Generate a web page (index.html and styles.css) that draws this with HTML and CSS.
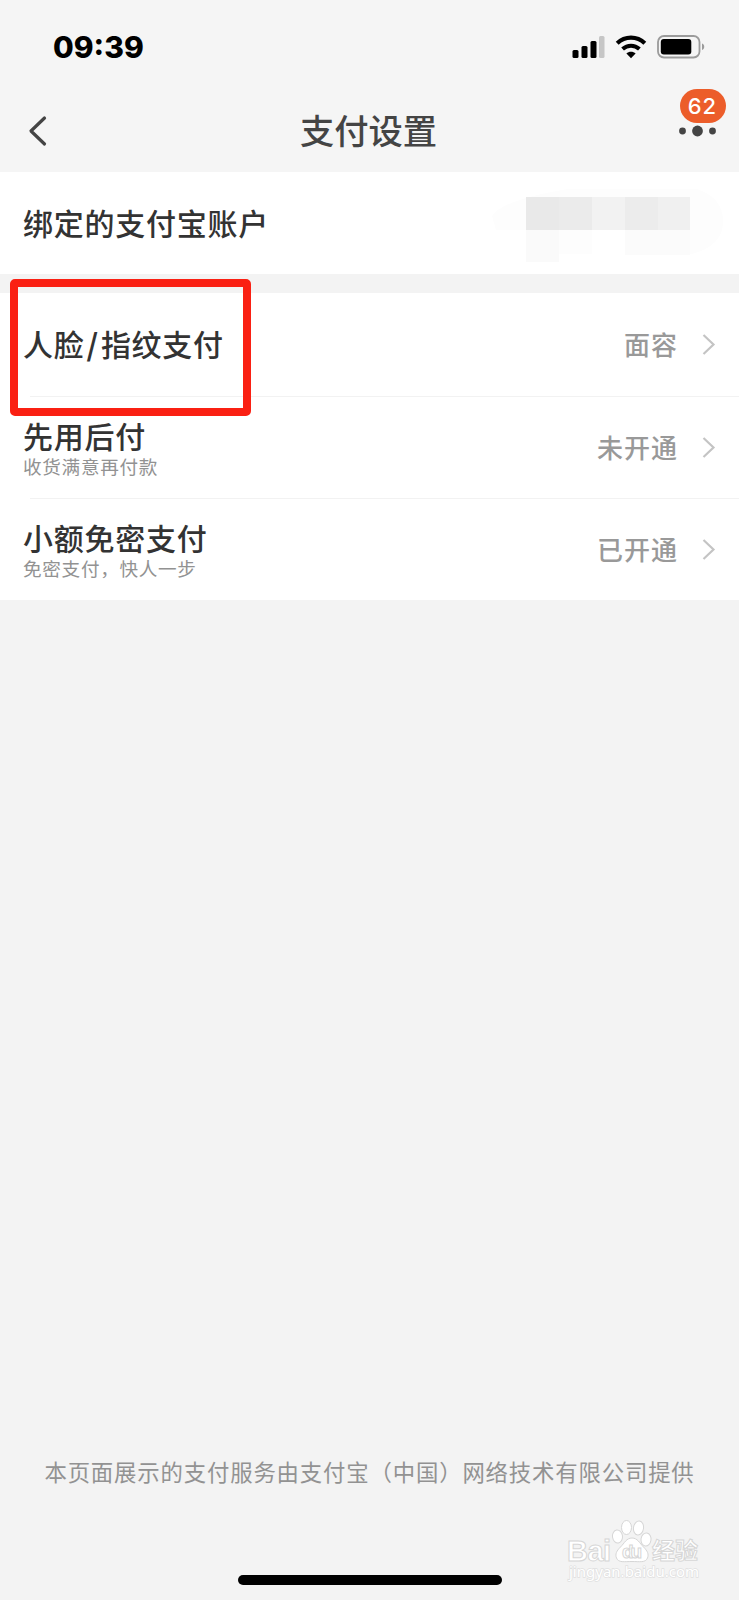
FILE: index.html
```html
<!DOCTYPE html>
<html lang="zh-CN">
<head>
    <meta charset="UTF-8">
    <meta name="viewport" content="width=device-width, initial-scale=1.0">
    <title>支付设置</title>
    <link rel="stylesheet" href="styles.css">
</head>
<body>
    <div class="screen">
        <div class="status-bar">
            <span class="time">09:39</span>
            <div class="status-icons">
                <svg class="signal" width="33" height="24" viewBox="0 0 33 24">
                    <rect x="0.5" y="15" width="6" height="8" rx="1.5"></rect>
                    <rect x="9.5" y="11" width="6" height="12" rx="1.5"></rect>
                    <rect x="18.5" y="6" width="6" height="17" rx="1.5"></rect>
                    <rect x="27" y="1" width="5.5" height="22" rx="1.5" fill="#c6c6c6"></rect>
                </svg>
                <svg class="wifi" width="32" height="24" viewBox="0 0 32 24">
                    <path d="M2.2 8.2C10 0.8 22 0.8 29.8 8.2" fill="none" stroke="#000" stroke-width="4.2"></path>
                    <path d="M7.6 14C12.4 9.6 19.6 9.6 24.4 14" fill="none" stroke="#000" stroke-width="4"></path>
                    <path d="M16 23.2L11.4 18.6C13.8 16.2 18.2 16.2 20.6 18.6Z"></path>
                </svg>
                <svg class="battery" width="48" height="24" viewBox="0 0 48 24">
                    <rect x="1" y="1" width="41.5" height="21.5" rx="6" fill="none" stroke="#9b9b9b" stroke-width="1.8"></rect>
                    <rect x="3.8" y="4" width="30.5" height="15.5" rx="3"></rect>
                    <path d="M45 8.5C48 9.5 48 14 45 15Z" fill="#9b9b9b"></path>
                </svg>
            </div>
        </div>

        <div class="nav-bar">
            <svg class="back" width="20" height="32" viewBox="0 0 20 32">
                <path d="M16.5 3L3 16L16.5 29" fill="none" stroke="#444" stroke-width="3.2" stroke-linecap="round" stroke-linejoin="round"></path>
            </svg>
            <h1 class="title">支付设置</h1>
            <div class="more">
                <svg width="38" height="12" viewBox="0 0 38 12">
                    <circle cx="3.5" cy="6" r="3.4"></circle>
                    <circle cx="18.5" cy="6" r="5.4"></circle>
                    <circle cx="33.5" cy="6" r="3.4"></circle>
                </svg>
                <span class="badge">62</span>
            </div>
        </div>

        <div class="group">
            <div class="row">
                <div class="name">绑定的支付宝账户</div>
                <!-- masked account number -->
                <svg class="mask" width="232" height="76" viewBox="0 0 232 76">
                    <path d="M0 28Q10 12 76 1H205Q232 10 231 35Q230 58 200 66H34V42H4Z" fill="#fdfdfd"></path>
                    <rect x="34" y="42" width="33" height="32" fill="#fafafa"></rect>
                    <rect x="100" y="42" width="33" height="26" fill="#fff"></rect>
                    <rect x="133" y="42" width="65" height="25" fill="#fbfbfb"></rect>
                    <rect x="34" y="9" width="33" height="33" fill="#e9e9e9"></rect>
                    <rect x="67" y="9" width="33" height="33" fill="#ebebeb"></rect>
                    <rect x="100" y="9" width="33" height="33" fill="#f2f2f2"></rect>
                    <rect x="133" y="9" width="33" height="33" fill="#ececec"></rect>
                    <rect x="166" y="9" width="32" height="33" fill="#f0f0f0"></rect>
                </svg>
            </div>
        </div>

        <div class="group">
            <div class="row">
                <div class="name">人脸<span class="slash">/</span>指纹支付</div>
                <span class="value">面容</span>
                <svg class="arrow" width="14" height="22" viewBox="0 0 14 22">
                    <path d="M1.5 2L11.5 11.5L1.5 21" fill="none" stroke="#c4c4c4" stroke-width="2.2"></path>
                </svg>
                <div class="highlight"></div>
            </div>
            <div class="row">
                <div class="name two-line">
                    <p class="label">先用后付</p>
                    <p class="desc">收货满意再付款</p>
                </div>
                <span class="value">未开通</span>
                <svg class="arrow" width="14" height="22" viewBox="0 0 14 22">
                    <path d="M1.5 2L11.5 11.5L1.5 21" fill="none" stroke="#c4c4c4" stroke-width="2.2"></path>
                </svg>
            </div>
            <div class="row">
                <div class="name two-line">
                    <p class="label">小额免密支付</p>
                    <p class="desc">免密支付，快人一步</p>
                </div>
                <span class="value">已开通</span>
                <svg class="arrow" width="14" height="22" viewBox="0 0 14 22">
                    <path d="M1.5 2L11.5 11.5L1.5 21" fill="none" stroke="#c4c4c4" stroke-width="2.2"></path>
                </svg>
            </div>
        </div>

        <div class="footer">
            <p class="notice">本页面展示的支付服务由支付宝（中国）网络技术有限公司提供</p>
            <div class="home-indicator"></div>
        </div>

        <svg class="watermark" width="140" height="72" viewBox="0 0 140 72">
            <g fill="#fff" stroke="#d6d6d6" stroke-width="1">
                <text class="wm-logo" x="5" y="43" textLength="44">Bai</text>
                <ellipse cx="55.5" cy="18.5" rx="5" ry="6.5" transform="rotate(-8 55.5 18.5)"></ellipse>
                <ellipse cx="64.5" cy="9.5" rx="5" ry="7"></ellipse>
                <ellipse cx="76.5" cy="10" rx="5" ry="7" transform="rotate(8 76.5 10)"></ellipse>
                <ellipse cx="84" cy="21.5" rx="5" ry="6.5" transform="rotate(8 84 21.5)"></ellipse>
                <path d="M70 20C75.5 20 77.5 25 81.5 29C85.5 33 87 36 85.5 40C83.5 45 77.5 43.5 70 43.5C62.5 43.5 56.5 45 54.5 40C53 36 54.5 33 58.5 29C62.5 25 64.5 20 70 20Z"></path>
                <text class="wm-du" x="60" y="40" textLength="20">du</text>
                <text class="wm-cn" x="90" y="41">经验</text>
                <text class="wm-url" x="7" y="59" textLength="130">jingyan.baidu.com</text>
            </g>
        </svg>
    </div>
</body>
</html>
```
FILE: styles.css
```css
* {
    box-sizing: border-box;
}

body {
    margin: 0;
    background: #f3f3f3;
    font-family: "Noto Sans CJK SC", "Noto Sans", sans-serif;
}

.screen {
    position: relative;
    display: flex;
    flex-direction: column;
    width: 739px;
    height: 1600px;
    overflow: hidden;
}

.status-bar {
    display: flex;
    justify-content: space-between;
    align-items: center;
    height: 94px;
    padding: 0 34px 0 53px;
    background: #f5f5f5;
}

.time {
    font-family: Inter, sans-serif;
    font-size: 30px;
    font-weight: 800;
    color: #000;
}

.status-icons {
    display: flex;
    align-items: center;
}

.wifi {
    margin: 0 10px 0 10px;
}

.nav-bar {
    display: flex;
    justify-content: space-between;
    align-items: center;
    height: 78px;
    padding: 0 22px 4px 28px;
    background: #f5f5f5;
}

.back {
    margin-right: 10px;
}

.title {
    margin: 0;
    padding-bottom: 4px;
    font-size: 34.3px;
    line-height: 50px;
    font-weight: 500;
    color: #444;
}

.more {
    position: relative;
    display: flex;
    fill: #444;
}

.badge {
    position: absolute;
    left: 1px;
    bottom: 14px;
    width: 46px;
    height: 34px;
    border-radius: 17px;
    background: #ec5d2a;
    color: #fff;
    font-family: Inter, sans-serif;
    font-size: 22px;
    font-weight: 500;
    line-height: 35px;
    letter-spacing: 1px;
    text-indent: -1px;
    text-align: center;
}

.group {
    margin-bottom: 19px;
    background: #fff;
}

.row {
    position: relative;
    display: flex;
    align-items: center;
    height: 102.3px;
    padding: 0 23px;
}

.row + .row::before {
    content: "";
    position: absolute;
    top: 0;
    left: 30px;
    right: 0;
    height: 1px;
    background: #f2f2f2;
}

.name {
    flex: 1;
    padding-bottom: 2px;
    font-size: 30px;
    font-weight: 500;
    line-height: 36px;
    letter-spacing: 0.75px;
    color: #333;
}

.two-line {
    padding: 2px 0 0;
}

.slash {
    margin: 0 2px;
    font-weight: 700;
}

.label {
    margin: 0;
}

.desc {
    margin: 0;
    font-size: 18.6px;
    font-weight: 400;
    line-height: 26px;
    letter-spacing: 0.7px;
    color: #929292;
}

.value {
    padding-bottom: 1px;
    font-size: 26px;
    font-weight: 500;
    letter-spacing: 1px;
    color: #999;
}

.arrow {
    margin-left: 24px;
}

.mask {
    margin: 6px -8px 0 0;
}

.highlight {
    position: absolute;
    z-index: 1;
    left: 10px;
    top: -14px;
    width: 241px;
    height: 137px;
    border: 8px solid #fa2013;
    border-radius: 5px;
}

.footer {
    display: flex;
    flex-direction: column;
    align-items: center;
    margin-top: auto;
    padding-bottom: 15px;
}

.notice {
    margin: 0 0 87px;
    font-size: 22.4px;
    line-height: 34px;
    letter-spacing: 0.83px;
    white-space: nowrap;
    color: #929292;
}

.home-indicator {
    width: 264px;
    height: 10px;
    border-radius: 5px;
    background: #000;
}

.watermark {
    position: absolute;
    left: 562px;
    top: 1518px;
}

.wm-logo {
    font-family: "Liberation Sans", sans-serif;
    font-size: 29px;
    font-weight: 700;
}

.wm-du {
    font-family: "Liberation Sans", sans-serif;
    font-size: 19px;
    font-weight: 700;
}

.wm-cn {
    font-size: 23px;
    font-weight: 700;
}

.wm-url {
    font-family: "Noto Sans", sans-serif;
    font-size: 15px;
    stroke: #e0e0e0;
    stroke-width: 1.4px;
    paint-order: stroke;
}
```
